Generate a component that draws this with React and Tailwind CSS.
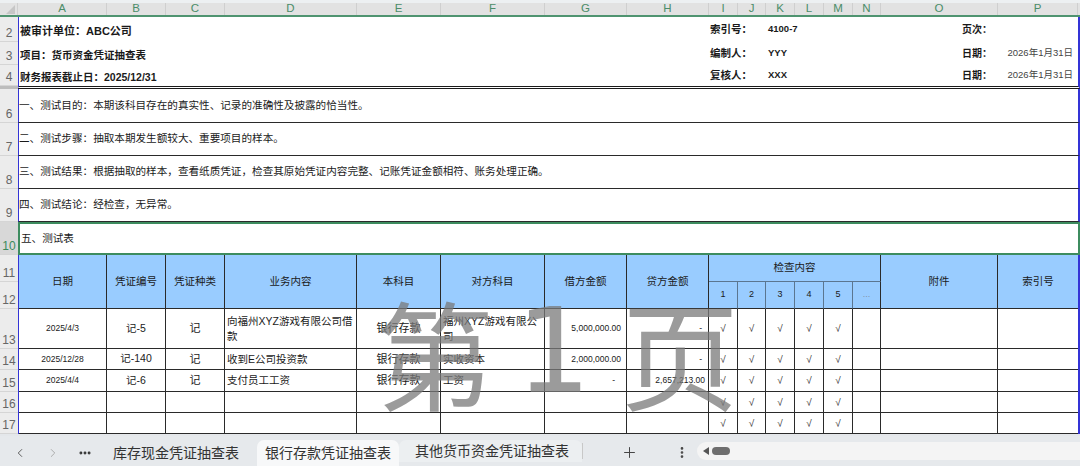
import React from 'react';
import { ChevronLeft, ChevronRight, Ellipsis, Plus, EllipsisVertical } from 'lucide-react';

const COLS = [
  ['A', 'w-[89px]'], ['B', 'w-[59px]'], ['C', 'w-[59px]'], ['D', 'w-[132px]'],
  ['E', 'w-[84px]'], ['F', 'w-[104px]'], ['G', 'w-[82px]'], ['H', 'w-[82px]'],
  ['I', 'w-[29px]'], ['J', 'w-[28px]'], ['K', 'w-[29px]'], ['L', 'w-[29px]'],
  ['M', 'w-[29px]'], ['N', 'w-[28px]'], ['O', 'w-[117px]'], ['P', 'w-[80px]'],
];

function RH({ n, h, active = false }) {
  return (
    <div
      className={`${h} flex items-end justify-center border-b border-[#d5d5d5] pb-[2px] text-[12px] leading-none ${
        active ? 'bg-[#d8d8d8] text-[#3a8a5c]' : 'bg-[#ececec] text-[#666666]'
      }`}
    >
      {n}
    </div>
  );
}

const DESC = [
  ['6', 'h-[34px]', '一、测试目的：本期该科目存在的真实性、记录的准确性及披露的恰当性。'],
  ['7', 'h-[33px]', '二、测试步骤：抽取本期发生额较大、重要项目的样本。'],
  ['8', 'h-[33px]', '三、测试结果：根据抽取的样本，查看纸质凭证，检查其原始凭证内容完整、记账凭证金额相符、账务处理正确。'],
  ['9', 'h-[33px]', '四、测试结论：经检查，无异常。'],
];

const HEAD = ['日期', '凭证编号', '凭证种类', '业务内容', '本科目', '对方科目', '借方金额', '贷方金额'];

const DATA = [
  { date: '2025/4/3', no: '记-5', t: '记', desc: '向福州XYZ游戏有限公司借款', acc: '银行存款', opp: '福州XYZ游戏有限公司', dr: '5,000,000.00', cr: '-' },
  { date: '2025/12/28', no: '记-140', t: '记', desc: '收到E公司投资款', acc: '银行存款', opp: '实收资本', dr: '2,000,000.00', cr: '-' },
  { date: '2025/4/4', no: '记-6', t: '记', desc: '支付员工工资', acc: '银行存款', opp: '工资', dr: '-', cr: '2,657,213.00' },
  { empty: true },
  { empty: true },
];

const cell = 'border-r border-b border-[#2a2a2a] flex items-center overflow-visible whitespace-nowrap';
const hcell = 'border-r border-b border-[#2a2a2a] bg-[#99ccff] flex items-center justify-center text-[10.5px] text-[#1a1a1a]';

function DataRow({ r }) {
  const e = r.empty;
  return (
    <>
      <div className={`${cell} justify-center text-[8.5px]`}>{e ? '' : r.date}</div>
      <div className={`${cell} justify-center text-[10.5px]`}>{e ? '' : r.no}</div>
      <div className={`${cell} justify-center text-[11px]`}>{e ? '' : r.t}</div>
      <div className="border-r border-b border-[#2a2a2a] flex items-center pl-[2px] text-[10.5px] leading-[15px]">{e ? '' : r.desc}</div>
      <div className={`${cell} justify-center text-[11px]`}>{e ? '' : r.acc}</div>
      <div className="border-r border-b border-[#2a2a2a] flex items-center pl-[2px] pr-[1px] text-[10.5px] leading-[15px]">{e ? '' : r.opp}</div>
      <div className={`${cell} justify-end text-[8.5px] ${r.dr === '-' ? 'pr-[11px]' : 'pr-[5px]'}`}>{e ? '' : r.dr}</div>
      <div className={`${cell} justify-end text-[8.5px] ${r.cr === '-' ? 'pr-[6px]' : 'pr-[3px]'}`}>{e ? '' : r.cr}</div>
      {[1, 2, 3, 4, 5].map((k) => (
        <div key={k} className={`${cell} justify-center text-[10px] text-[#333333]`}>√</div>
      ))}
      <div className={cell}></div>
      <div className={cell}></div>
      <div className="border-b border-[#2a2a2a]"></div>
    </>
  );
}

export default function App() {
  return (
    <div className="relative w-[1080px] h-[466px] overflow-hidden bg-white text-[#1a1a1a] font-['Liberation_Sans','Noto_Sans_CJK_SC',sans-serif]">
      {/* column header */}
      <div className="flex h-[17px] border-t-[3px] border-t-[#edf0f2] border-b-2 border-b-[#4f9470] bg-[#e2e2e2]">
        <div className="relative w-[18px] shrink-0 border-r border-[#cfcfcf]">
          <svg className="absolute right-[2px] bottom-[1px]" width="9" height="9" viewBox="0 0 9 9">
            <polygon points="9,0 9,9 0,9" fill="#c6c6c6" />
          </svg>
        </div>
        {COLS.map(([l, w]) => (
          <div key={l} className={`${w} shrink-0 flex items-center justify-center border-r border-[#cfcfcf] text-[11.5px] leading-none text-[#4b8d69]`}>
            {l}
          </div>
        ))}
        <div className="w-[2px]"></div>
      </div>

      {/* rows 2-4 */}
      <div className="flex">
        <div className="flex w-[18px] shrink-0 flex-col">
          <RH n="2" h="h-[25px]" />
          <RH n="3" h="h-[23px]" />
          <RH n="4" h="h-[21px]" />
          <div className="h-[3px] bg-[#bdbdbd]"></div>
        </div>
        <div className="w-[1062px] border-l border-l-[#3434d6] border-r-2 border-r-[#3434d6] border-b-[3px] border-b-[#1a1a1a] border-double">
          {[
            ['h-[25px]', <span className="text-[11px] font-bold">被审计单位：ABC公司</span>, '索引号：', '4100-7', '页次：', ''],
            ['h-[23px]', <span className="text-[10.5px] font-bold">项目：货币资金凭证抽查表</span>, '编制人：', 'YYY', '日期：', '2026年1月31日'],
            ['h-[21px]', <span className="text-[10.5px] font-bold">财务报表截止日：2025/12/31</span>, '复核人：', 'XXX', '日期：', '2026年1月31日'],
          ].map(([h, left, l1, v1, l2, v2], i) => (
            <div key={i} className={`${h} flex items-center`}>
              <div className="w-[690px] pl-[1px]">{left}</div>
              <div className="w-[57px] pl-[1px] text-[10.5px] font-bold">{l1}</div>
              <div className="w-[115px] pl-[2px] text-[9.5px] font-bold">{v1}</div>
              <div className="w-[117px] pr-[6px] text-right text-[10px] font-bold">{l2}</div>
              <div className="w-[80px] pr-[5px] text-right text-[9.5px] text-[#444444]">{v2}</div>
            </div>
          ))}
        </div>
      </div>

      {/* description rows 6-9 */}
      {DESC.map(([n, h, text]) => (
        <div key={n} className="flex">
          <div className="w-[18px] shrink-0">
            <RH n={n} h={h} />
          </div>
          <div className={`${h} w-[1062px] flex items-center border-l border-l-[#3434d6] border-r-2 border-r-[#3434d6] border-b border-b-[#2a2a2a] text-[10.6px]`}>
            {text}
          </div>
        </div>
      ))}

      {/* row 10 selected */}
      <div className="flex">
        <div className="w-[18px] shrink-0">
          <RH n="10" h="h-[33px]" active />
        </div>
        <div className="h-[33px] w-[1062px] flex items-center border-2 border-[#3d8c5f] pl-[1px] text-[10.6px]">
          五、测试表
        </div>
      </div>

      {/* table rows 11-17 */}
      <div className="flex">
        <div className="flex w-[18px] shrink-0 flex-col">
          <RH n="11" h="h-[27px]" />
          <RH n="12" h="h-[27px]" />
          <RH n="13" h="h-[40px]" />
          <RH n="14" h="h-[21px]" />
          <RH n="15" h="h-[22px]" />
          <RH n="16" h="h-[21px]" />
          <RH n="17" h="h-[21px]" />
        </div>
        <div className="w-[1062px] border-l border-l-[#3434d6] border-r-2 border-r-[#3434d6]">
          <div className="grid grid-cols-[88px_59px_59px_132px_84px_104px_82px_82px_29px_28px_29px_29px_29px_28px_117px_80px] grid-rows-[27px_27px_40px_21px_22px_21px_21px]">
            {HEAD.map((t) => (
              <div key={t} className={`${hcell} row-span-2`}>{t}</div>
            ))}
            <div className="col-span-6 border-r border-b border-r-[#2a2a2a] border-b-[#5b7690] bg-[#99ccff] flex items-center justify-center text-[10.5px]">
              检查内容
            </div>
            <div className={`${hcell} row-span-2`}>附件</div>
            <div className="row-span-2 border-b border-[#2a2a2a] bg-[#99ccff] flex items-center justify-center text-[10.5px]">索引号</div>
            {['1', '2', '3', '4', '5'].map((k) => (
              <div key={k} className="border-r border-b border-r-[#5b7690] border-b-[#2a2a2a] bg-[#99ccff] flex items-center justify-center text-[9px]">{k}</div>
            ))}
            <div className="border-r border-b border-[#2a2a2a] bg-[#99ccff] flex items-center justify-center text-[8px] text-[#777777]">…</div>
            {DATA.map((r, i) => (
              <DataRow key={i} r={r} />
            ))}
          </div>
        </div>
      </div>

      {/* gap */}
      <div className="h-[2px] bg-[#e4e7ea]"></div>

      {/* sheet tabs */}
      <div className="flex h-[30px] bg-[#e6e9ec] text-[14px] text-[#333333]">
        <div className="flex w-[40px] items-center justify-center pt-[4px] text-[#555555]">
          <ChevronLeft size={14} strokeWidth={1.6} />
        </div>
        <div className="flex w-[26px] items-center justify-center pt-[4px] text-[#a8a8a8]">
          <ChevronRight size={14} strokeWidth={1.6} />
        </div>
        <div className="flex w-[38px] items-center justify-center pt-[4px] text-[#333333]">
          <Ellipsis size={14} strokeWidth={3} />
        </div>
        <div className="flex w-[153px] items-center pl-[9px] pt-[5px]">库存现金凭证抽查表</div>
        <div className="relative mt-[4px] flex w-[142px] items-center rounded-t-[7px] bg-[#f7f8f9] pl-[8px] pt-[1px]">
          <span className="relative">
            银行存款凭证抽查表
            <span className="absolute left-0 right-0 bottom-[-5px] h-[2px] bg-[#1f7a45]"></span>
          </span>
        </div>
        <div className="my-[4px] flex w-[183px] items-center rounded-t-[7px] bg-[#eceff1] pl-[16px] pt-[1px]">其他货币资金凭证抽查表</div>
        <div className="my-auto h-[16px] w-px bg-[#c8c8c8]"></div>
        <div className="flex w-[92px] items-center justify-center pt-[3px] text-[#444444]">
          <Plus size={17} strokeWidth={1.4} />
        </div>
        <div className="flex w-[14px] items-center justify-center pt-[3px] text-[#444444]">
          <EllipsisVertical size={15} strokeWidth={2.6} />
        </div>
        <div className="ml-[8px] my-[6px] flex flex-1 items-center gap-[3px] rounded-l-full bg-[#f4f4f4] pl-[6px]">
          <svg width="6" height="8" viewBox="0 0 6 8">
            <polygon points="6,0 6,8 0,4" fill="#555555" />
          </svg>
          <div className="h-[8px] w-[18px] rounded-full bg-[#6e6e6e]"></div>
        </div>
      </div>

      {/* watermark */}
      <div className="pointer-events-none absolute left-[376px] top-[292px] flex items-start text-[118px] leading-none text-[#7a7a7a]/75 font-['Noto_Sans_CJK_SC',sans-serif]">
        <span>第</span>
        <span className="ml-[22px] font-['DejaVu_Sans',sans-serif]">1</span>
        <span className="ml-[30px]">页</span>
      </div>
    </div>
  );
}
